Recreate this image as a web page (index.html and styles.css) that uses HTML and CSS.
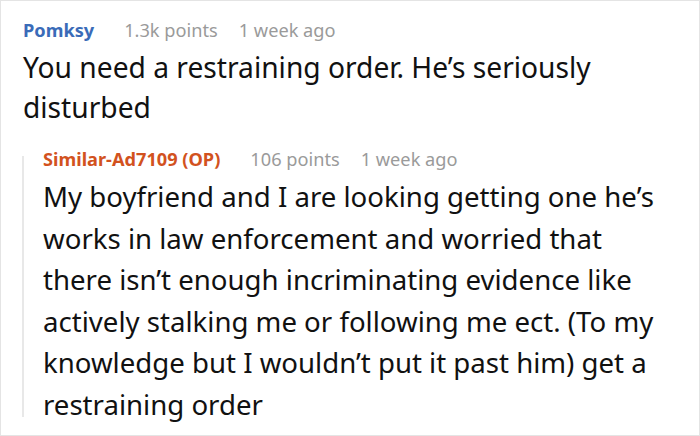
FILE: index.html
```html
<!DOCTYPE html>
<html>
<head>
<meta charset="utf-8">
<link rel="stylesheet" href="styles.css">
</head>
<body>
<div class="frame">
  <div class="comment">
    <div class="meta">
      <span class="author">Pomksy</span>
      <span class="points">1.3k points</span>
      <span class="time">1 week ago</span>
    </div>
    <p class="body">You need a restraining order. He’s seriously disturbed</p>
  </div>
  <div class="reply">
    <div class="meta">
      <span class="author op">Similar-Ad7109 (OP)</span>
      <span class="points">106 points</span>
      <span class="time">1 week ago</span>
    </div>
    <p class="body reply-body">My boyfriend and I are looking getting one he’s works in law enforcement and worried that there isn’t enough incriminating evidence like actively stalking me or following me ect. (To my knowledge but I wouldn’t put it past him) get a restraining order</p>
  </div>
</div>
</body>
</html>
```

FILE: styles.css
```css
html, body {
  margin: 0;
  padding: 0;
  background: #fff;
}
.frame {
  box-sizing: border-box;
  width: 700px;
  height: 436px;
  border: 1px solid #e4e4e4;
  padding: 18px 32px 0 22px;
  font-family: "Noto Sans", "Open Sans", sans-serif;
  color: #111;
  overflow: hidden;
}
.meta {
  display: flex;
  align-items: baseline;
  font-size: 18.2px;
  line-height: 22px;
  color: #9a9a9a;
}
.author {
  font-weight: bold;
  color: #3a6bb8;
  margin-right: 30px;
}
.author.op {
  color: #d2521e;
}
.points {
  margin-right: 21px;
}
.body {
  margin: 6px 0 0 0;
  font-size: 28.2px;
  line-height: 40px;
}
.reply {
  position: relative;
  margin-top: 21px;
  padding-left: 20px;
}
.reply::before {
  content: "";
  position: absolute;
  left: -1px;
  top: 8px;
  bottom: 9px;
  width: 2px;
  background: #e8e8e8;
}
.reply-body {
  font-size: 27.6px;
  line-height: 41.6px;
}
```
